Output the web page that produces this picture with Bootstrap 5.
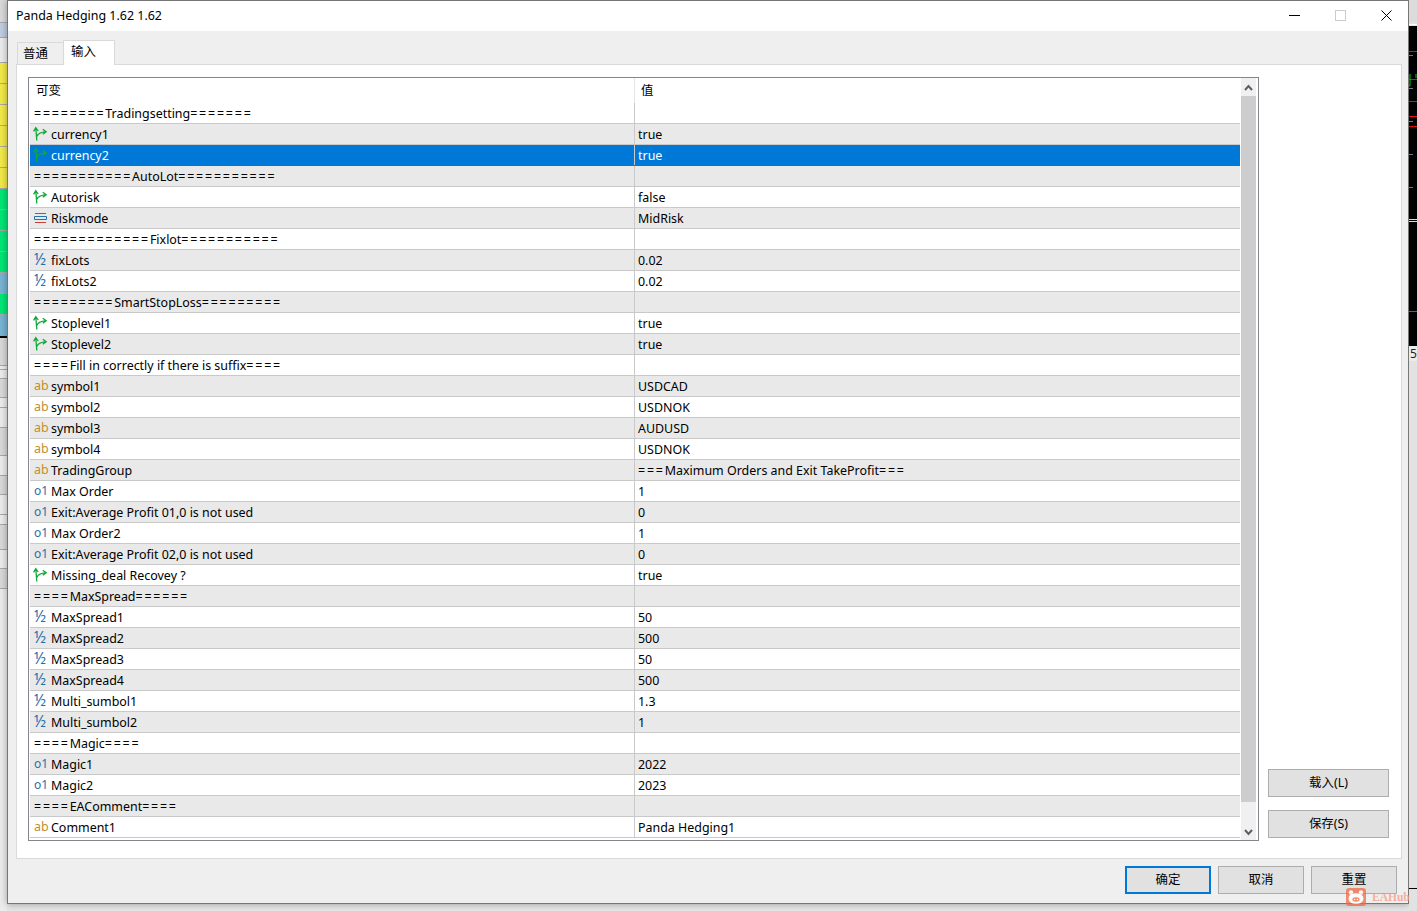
<!DOCTYPE html>
<html lang="en">
<head>
  <meta charset="utf-8"/>
  <title>Panda Hedging 1.62 1.62</title>
  <link href="https://cdn.jsdelivr.net/npm/bootstrap@5.3.0/dist/css/bootstrap.min.css" rel="stylesheet"/>
  <style>
    html, body { height: 100%; }
    body {
      margin: 0;
      width: 1417px;
      height: 911px;
      overflow: hidden;
      position: relative;
      background: #e6e6e6;
      color: #000;
      font: 12.45px/20px "Noto Sans", "Noto Sans CJK SC", sans-serif;
    }
    /* what shows behind the dialog */
    .back-left { width: 7px; height: 911px; flex: none; background: linear-gradient(90deg, #e4e4e4, #f2f2f2); }
    .back-left div { border-bottom: 1px solid #a8a8a8; }
    .s-gray { background: #d9d9d9; }
    .s-blue { background: #c0cde0; }
    .s-pale { background: #ececec; }
    .s-yellow { height: 21px; background: #f2ea48; }
    .s-green { height: 21px; background: #00e676; }
    .s-teal { height: 21px; background: #78b4d2; }
    .s-chart { flex: none; }
    .back-right { width: 8px; height: 911px; flex: none; background: #e2e2e2; }

    .dialog {
      width: 1402px;
      height: 904px;
      flex: none;
      border: 1px solid #767676;
      background: #efefef;
      box-shadow: 0 0 7px rgba(0, 0, 0, .35);
    }
    .title-bar { height: 30px; background: #fff; padding: 0 0 1px 8px; }
    .win-btns { margin-right: -1px; }
    .win-btn { width: 46px; height: 28px; }

    .tabs-row { padding: 9px 0 0 9px; height: 33px; line-height: 18px; }
    .dlg-tab { border: 1px solid #d9d9d9; border-bottom: 0; width: 47px; height: 22px; margin-top: 2px; padding: 2px 0 0 5px; }
    .dlg-tab.on { width: 52px; height: 25px; margin-top: 0; margin-left: -1px; background: #fff; padding: 2px 0 0 7px; margin-bottom: -1px; position: relative; z-index: 1; }
    .dlg-panel {
      height: 795px;
      margin: 0 6px 0 8px;
      padding: 12px 12px 0 11px;
      background: #fff;
      border: 1px solid #d9d9d9;
      align-items: flex-start;
    }
    .param-box {
      width: 1231px;
      height: 764px;
      flex: none;
      border: 1px solid #85858c;
      padding-left: 1px;
    }
    .param-list { width: 1210px; flex: none; }
    .head-row { height: 25px; }
    .head-row .name-c { padding: 3px 0 0 6px; }
    .head-row .val-c { padding: 3px 0 0 6px; border-left-color: #e6e6e6; }
    .p-row { height: 21px; border-bottom: 1px solid #c9c9c9; background: #fff; line-height: 19px; }
    .p-row:nth-child(even) { background: #e9e9e9; }
    .p-row.picked { background: #0078d7; color: #fff; border-bottom-color: #0078d7; }
    .name-c { width: 604px; flex: none; padding: 1px 0 0 4px; white-space: nowrap; }
    .val-c { flex: 1; border-left: 1px solid #c9c9c9; padding: 1px 0 0 3px; white-space: nowrap; }
    .eq-run { letter-spacing: 1.8px; }
    .p-icon { width: 17px; height: 19px; line-height: 17px; display: inline-block; vertical-align: top; }
    .p-icon svg { display: block; margin: 1px 0 0 -1px; }
    .i-ab { color: #c48f28; font-size: 12.5px; }
    .i-int { color: #2b6ea8; font-size: 12px; }
    .i-dbl { color: #1f6fb0; font-size: 15.5px; }

    .scroll-col { width: 15px; flex: none; margin-left: 1px; background: #f0f0f0; }
    .scroll-end { height: 18px; }
    .scroll-thumb { height: 706px; background: #cdcdcd; }

    .side-col { width: 121px; height: 764px; margin-left: 9px; padding-bottom: 3px; gap: 13px; }
    .win-button {
      height: 28px;
      padding: 0 0 1px;
      border: 1px solid #adadad;
      border-radius: 0;
      background: #e1e1e1;
      color: #000;
      font-size: 12.45px;
      line-height: 22px;
    }
    .foot-row { padding: 7px 11px 0 0; gap: 7px; }
    .foot-row .win-button { width: 86px; }
    .foot-row .win-button.main-btn { border: 2px solid #0078d7; }

    .stamp { position: absolute; left: 1346px; top: 887px; gap: 6px; opacity: .75; }
    .stamp span { color: #f49a85; font: bold 11.5px/18px "Liberation Serif", serif; padding-top: 1px; }
  </style>
</head>
<body class="d-flex">
  <svg width="0" height="0" class="position-absolute">
    <symbol id="fork" viewBox="0 0 16 16">
      <path d="M3.8 14.5 L2.8 2 M.6 5.4 L2.8 1.6 L5.2 5 M4 10.4 C4.8 7.4 8 6.2 13 5.7 M9.8 3.2 L13.2 5.7 L9.8 8.3" fill="none" stroke="#0fa838" stroke-width="1.3"/>
    </symbol>
    <symbol id="enum" viewBox="0 0 16 16">
      <path d="M2 3.5 H13 M2 12.5 H13" stroke="#c8403a" stroke-width="1.2"/>
      <path d="M1.5 6.5 H13.5 V9.5 H1.5 Z" fill="#dcebf7" stroke="#2b6ea8"/>
    </symbol>
  </svg>

  <div class="back-left">
    <div class="s-gray" style="height:23px"></div>
    <div class="s-blue" style="height:15px"></div>
    <div class="s-pale" style="height:25px"></div>
    <div class="s-yellow"></div><div class="s-yellow"></div><div class="s-yellow"></div>
    <div class="s-yellow"></div><div class="s-yellow"></div><div class="s-yellow"></div>
    <div class="s-green"></div><div class="s-green"></div><div class="s-green"></div><div class="s-green"></div>
    <div class="s-teal"></div>
    <div class="s-green"></div>
    <div class="s-teal" style="height:23px;border-bottom:2px solid #000"></div>
    <div class="s-gray" style="height:28px"></div>
    <div class="s-pale" style="height:4px"></div>
    <div class="s-pale" style="height:9px"></div>
    <div class="s-gray" style="height:19px"></div>
    <div class="s-pale" style="height:10px"></div>
    <div class="s-pale" style="height:20px"></div>
    <div class="s-gray" style="height:28px"></div>
    <div class="s-pale" style="height:20px"></div>
    <div class="s-gray" style="height:19px"></div>
    <div class="s-pale" style="height:20px"></div>
    <div class="s-pale" style="height:10px"></div>
    <div class="s-gray" style="height:25px"></div>
    <div class="s-pale" style="height:19px"></div>
    <div class="s-gray" style="height:20px"></div>
    <div class="s-pale" style="height:325px;border-bottom:1px solid #000"></div>
  </div>

  <div class="dialog d-flex flex-column">
    <div class="title-bar d-flex align-items-center justify-content-between">
      <span>Panda Hedging 1.62 1.62</span>
      <div class="win-btns d-flex">
        <div class="win-btn d-flex align-items-center justify-content-center">
          <svg width="11" height="11" viewBox="0 0 11 11"><path d="M0 5.5 H11" stroke="#000"/></svg>
        </div>
        <div class="win-btn d-flex align-items-center justify-content-center">
          <svg width="11" height="11" viewBox="0 0 11 11"><rect x=".5" y=".5" width="10" height="10" fill="none" stroke="#ccc"/></svg>
        </div>
        <div class="win-btn d-flex align-items-center justify-content-center">
          <svg width="11" height="11" viewBox="0 0 11 11"><path d="M.5 .5 L10.5 10.5 M10.5 .5 L.5 10.5" stroke="#000"/></svg>
        </div>
      </div>
    </div>

    <div class="tabs-row d-flex">
      <div class="dlg-tab">普通</div>
      <div class="dlg-tab on">输入</div>
    </div>

    <div class="dlg-panel d-flex">
      <div class="param-box d-flex">
        <div class="param-list">
          <div class="head-row d-flex"><div class="name-c">可变</div><div class="val-c">值</div></div>
          <div>
            <div class="p-row d-flex"><div class="name-c"><span class="eq-run">========</span>Tradingsetting<span class="eq-run">=======</span></div><div class="val-c"></div></div>
            <div class="p-row d-flex"><div class="name-c"><span class="p-icon"><svg width="16" height="16"><use href="#fork"/></svg></span>currency1</div><div class="val-c">true</div></div>
            <div class="p-row picked d-flex"><div class="name-c"><span class="p-icon"><svg width="16" height="16"><use href="#fork"/></svg></span>currency2</div><div class="val-c">true</div></div>
            <div class="p-row d-flex"><div class="name-c"><span class="eq-run">===========</span>AutoLot<span class="eq-run">===========</span></div><div class="val-c"></div></div>
            <div class="p-row d-flex"><div class="name-c"><span class="p-icon"><svg width="16" height="16"><use href="#fork"/></svg></span>Autorisk</div><div class="val-c">false</div></div>
            <div class="p-row d-flex"><div class="name-c"><span class="p-icon"><svg width="16" height="16"><use href="#enum"/></svg></span>Riskmode</div><div class="val-c">MidRisk</div></div>
            <div class="p-row d-flex"><div class="name-c"><span class="eq-run">=============</span>Fixlot<span class="eq-run">===========</span></div><div class="val-c"></div></div>
            <div class="p-row d-flex"><div class="name-c"><span class="p-icon i-dbl">½</span>fixLots</div><div class="val-c">0.02</div></div>
            <div class="p-row d-flex"><div class="name-c"><span class="p-icon i-dbl">½</span>fixLots2</div><div class="val-c">0.02</div></div>
            <div class="p-row d-flex"><div class="name-c"><span class="eq-run">=========</span>SmartStopLoss<span class="eq-run">=========</span></div><div class="val-c"></div></div>
            <div class="p-row d-flex"><div class="name-c"><span class="p-icon"><svg width="16" height="16"><use href="#fork"/></svg></span>Stoplevel1</div><div class="val-c">true</div></div>
            <div class="p-row d-flex"><div class="name-c"><span class="p-icon"><svg width="16" height="16"><use href="#fork"/></svg></span>Stoplevel2</div><div class="val-c">true</div></div>
            <div class="p-row d-flex"><div class="name-c"><span class="eq-run">====</span>Fill in correctly if there is suffix<span class="eq-run">====</span></div><div class="val-c"></div></div>
            <div class="p-row d-flex"><div class="name-c"><span class="p-icon i-ab">ab</span>symbol1</div><div class="val-c">USDCAD</div></div>
            <div class="p-row d-flex"><div class="name-c"><span class="p-icon i-ab">ab</span>symbol2</div><div class="val-c">USDNOK</div></div>
            <div class="p-row d-flex"><div class="name-c"><span class="p-icon i-ab">ab</span>symbol3</div><div class="val-c">AUDUSD</div></div>
            <div class="p-row d-flex"><div class="name-c"><span class="p-icon i-ab">ab</span>symbol4</div><div class="val-c">USDNOK</div></div>
            <div class="p-row d-flex"><div class="name-c"><span class="p-icon i-ab">ab</span>TradingGroup</div><div class="val-c"><span class="eq-run">===</span>Maximum Orders and Exit TakeProfit<span class="eq-run">===</span></div></div>
            <div class="p-row d-flex"><div class="name-c"><span class="p-icon i-int">o1</span>Max Order</div><div class="val-c">1</div></div>
            <div class="p-row d-flex"><div class="name-c"><span class="p-icon i-int">o1</span>Exit:Average Profit 01,0 is not used</div><div class="val-c">0</div></div>
            <div class="p-row d-flex"><div class="name-c"><span class="p-icon i-int">o1</span>Max Order2</div><div class="val-c">1</div></div>
            <div class="p-row d-flex"><div class="name-c"><span class="p-icon i-int">o1</span>Exit:Average Profit 02,0 is not used</div><div class="val-c">0</div></div>
            <div class="p-row d-flex"><div class="name-c"><span class="p-icon"><svg width="16" height="16"><use href="#fork"/></svg></span>Missing_deal Recovey ?</div><div class="val-c">true</div></div>
            <div class="p-row d-flex"><div class="name-c"><span class="eq-run">====</span>MaxSpread<span class="eq-run">======</span></div><div class="val-c"></div></div>
            <div class="p-row d-flex"><div class="name-c"><span class="p-icon i-dbl">½</span>MaxSpread1</div><div class="val-c">50</div></div>
            <div class="p-row d-flex"><div class="name-c"><span class="p-icon i-dbl">½</span>MaxSpread2</div><div class="val-c">500</div></div>
            <div class="p-row d-flex"><div class="name-c"><span class="p-icon i-dbl">½</span>MaxSpread3</div><div class="val-c">50</div></div>
            <div class="p-row d-flex"><div class="name-c"><span class="p-icon i-dbl">½</span>MaxSpread4</div><div class="val-c">500</div></div>
            <div class="p-row d-flex"><div class="name-c"><span class="p-icon i-dbl">½</span>Multi_sumbol1</div><div class="val-c">1.3</div></div>
            <div class="p-row d-flex"><div class="name-c"><span class="p-icon i-dbl">½</span>Multi_sumbol2</div><div class="val-c">1</div></div>
            <div class="p-row d-flex"><div class="name-c"><span class="eq-run">====</span>Magic<span class="eq-run">====</span></div><div class="val-c"></div></div>
            <div class="p-row d-flex"><div class="name-c"><span class="p-icon i-int">o1</span>Magic1</div><div class="val-c">2022</div></div>
            <div class="p-row d-flex"><div class="name-c"><span class="p-icon i-int">o1</span>Magic2</div><div class="val-c">2023</div></div>
            <div class="p-row d-flex"><div class="name-c"><span class="eq-run">====</span>EAComment<span class="eq-run">====</span></div><div class="val-c"></div></div>
            <div class="p-row d-flex"><div class="name-c"><span class="p-icon i-ab">ab</span>Comment1</div><div class="val-c">Panda Hedging1</div></div>
          </div>
        </div>
        <div class="scroll-col d-flex flex-column">
          <div class="scroll-end d-flex align-items-center justify-content-center">
            <svg width="9" height="7" viewBox="0 0 9 7"><path d="M1 6 L4.5 2 L8 6" fill="none" stroke="#606060" stroke-width="2"/></svg>
          </div>
          <div class="scroll-thumb"></div>
          <div class="flex-grow-1 d-flex align-items-end justify-content-center pb-1">
            <svg width="9" height="7" viewBox="0 0 9 7"><path d="M1 1 L4.5 5 L8 1" fill="none" stroke="#606060" stroke-width="2"/></svg>
          </div>
        </div>
      </div>
      <div class="side-col d-flex flex-column justify-content-end">
        <button type="button" class="btn win-button">载入(L)</button>
        <button type="button" class="btn win-button">保存(S)</button>
      </div>
    </div>

    <div class="foot-row d-flex justify-content-end">
      <button type="button" class="btn win-button main-btn">确定</button>
      <button type="button" class="btn win-button">取消</button>
      <button type="button" class="btn win-button">重置</button>
    </div>
  </div>

  <div class="back-right">
    <svg class="s-chart d-block" width="8" height="361" viewBox="0 0 8 361">
      <rect width="8" height="22" fill="#dcdcdc"/>
      <rect y="24" width="8" height="1" fill="#fff"/>
      <rect y="26" width="8" height="320" fill="#000"/>
      <path d="M0 51.5 H8 M0 79.5 H8 M0 101.5 H8 M0 116.5 H8 M0 126.5 H8" stroke="#e01010"/>
      <path d="M0 55.5 H4 M0 88.5 H4 M0 121.5 H4 M0 154.5 H4 M0 187.5 H4" stroke="#707890"/>
      <path d="M1 74 V86 H0 M7 74 V78" fill="none" stroke="#00d000"/>
      <path d="M0 219.5 H8 M0 221.5 H8" stroke="#d8d8d8"/>
      <path d="M0 311.5 H8" stroke="#2e7d55"/>
      <rect y="346" width="8" height="15" fill="#ececec"/>
      <text x="1" y="358" font-size="12" fill="#222" font-family="Noto Sans, sans-serif">5</text>
    </svg>
    <div style="height:528px;border-bottom:1px solid #000"></div>
  </div>

  <div class="stamp d-flex align-items-center">
    <svg width="20" height="18" viewBox="0 0 20 18">
      <rect width="20" height="18" rx="3" fill="#f26a45"/>
      <circle cx="5" cy="4.5" r="2.2" fill="#fff"/><circle cx="15" cy="4.5" r="2.2" fill="#fff"/>
      <ellipse cx="10" cy="10.5" rx="7.5" ry="5.5" fill="#fff"/>
      <ellipse cx="10" cy="11.5" rx="3.6" ry="2.2" fill="#f26a45"/>
      <circle cx="8.6" cy="11.5" r=".8" fill="#fff"/><circle cx="11.4" cy="11.5" r=".8" fill="#fff"/>
    </svg>
    <span>EAHub</span>
  </div>

  <script src="https://cdn.jsdelivr.net/npm/bootstrap@5.3.0/dist/js/bootstrap.bundle.min.js"></script>
</body>
</html>
